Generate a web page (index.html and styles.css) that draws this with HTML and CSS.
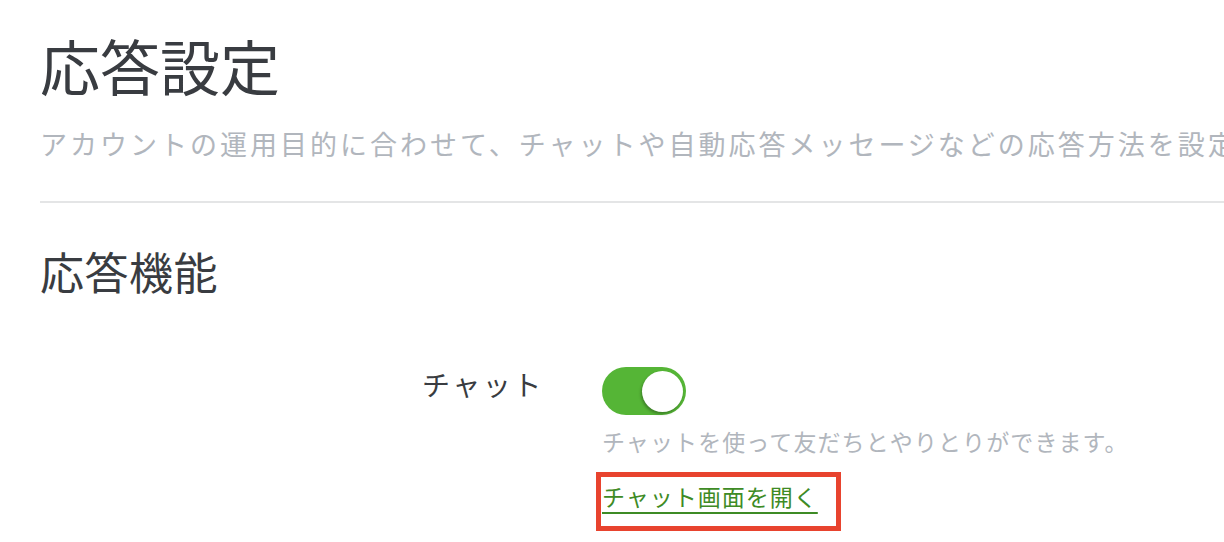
FILE: index.html
```html
<!DOCTYPE html>
<html lang="ja">
<head>
<meta charset="utf-8">
<title>応答設定</title>
<link rel="stylesheet" href="styles.css">
</head>
<body>
<main class="page">
  <header class="page-header">
    <h1 class="page-title">応答設定</h1>
    <div class="lead-clip">
      <p class="page-lead">アカウントの運用目的に合わせて、チャットや自動応答メッセージなどの応答方法を設定できます。</p>
    </div>
  </header>
  <section class="section">
    <h2 class="section-title">応答機能</h2>
    <div class="form-row">
      <div class="form-label">チャット</div>
      <div class="form-control">
        <label class="switch">
          <input type="checkbox" class="switch-input" checked>
          <span class="switch-track"><span class="switch-knob"></span></span>
        </label>
        <p class="form-help">チャットを使って友だちとやりとりができます。</p>
        <div class="highlight-box">
          <a class="link" href="#">チャット画面を開く</a>
        </div>
      </div>
    </div>
  </section>
</main>
</body>
</html>
```

FILE: styles.css
```css
html, body {
  margin: 0;
  padding: 0;
  background: #ffffff;
  overflow: hidden;
}

body {
  font-family: "Noto Sans CJK JP", "Noto Sans", sans-serif;
  color: #393c41;
}

.page {
  padding: 0 0 0 40px;
}

.page-header {
  border-bottom: 2px solid #e4e5e6;
  padding-bottom: 39px;
}

.page-title {
  margin: 29px 0 0;
  font-size: 60px;
  line-height: 72px;
  font-weight: 400;
  color: #393c41;
}

.lead-clip {
  margin-top: 25px;
  overflow: hidden;
}

.page-lead {
  margin: 0;
  font-size: 27px;
  line-height: 36px;
  letter-spacing: 3px;
  color: #b1b6bd;
  white-space: nowrap;
}

.section-title {
  margin: 42px 0 0;
  font-size: 44px;
  line-height: 52px;
  font-weight: 400;
  letter-spacing: 0.5px;
  color: #393c41;
}

.form-row {
  display: flex;
  align-items: flex-start;
  margin-top: 70px;
  padding-left: 384px;
}

.form-label {
  width: 178px;
  margin-left: -2px;
  margin-right: 2px;
  font-size: 28px;
  line-height: 34px;
  letter-spacing: 2.5px;
  color: #393c41;
}

.form-control {
  display: flex;
  flex-direction: column;
  align-items: flex-start;
}

.switch {
  display: block;
  cursor: pointer;
}

.switch-input {
  display: none;
}

.switch-track {
  display: flex;
  justify-content: flex-end;
  align-items: center;
  box-sizing: border-box;
  width: 84px;
  height: 48px;
  padding: 0 3px;
  border-radius: 24px;
  background: #55b536;
}

.switch-knob {
  display: block;
  width: 41px;
  height: 41px;
  border-radius: 50%;
  background: #ffffff;
  box-shadow: -1px 2px 3px rgba(0, 0, 0, 0.3);
}

.form-help {
  margin: 10px 0 0;
  font-size: 23px;
  line-height: 32px;
  letter-spacing: 1.1px;
  color: #b1b6bd;
}

.highlight-box {
  margin: 15px 0 0 -6px;
  width: 234px;
  height: 43px;
  border: 5px solid #e8432e;
  padding: 6px 0 0 1px;
}

.link {
  display: inline-block;
  font-size: 23px;
  line-height: 26px;
  letter-spacing: 1px;
  color: #3e8b25;
  text-decoration: underline;
  text-decoration-thickness: 2px;
  text-underline-offset: 6px;
}
```
